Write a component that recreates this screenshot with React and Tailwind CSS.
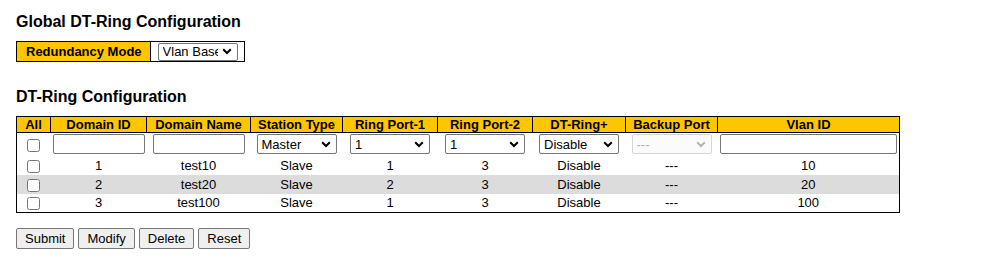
import React from "react";

const rows = [
  { id: 1, name: "test10", type: "Slave", p1: 1, p2: 3, plus: "Disable", backup: "---", vlan: 10 },
  { id: 2, name: "test20", type: "Slave", p1: 2, p2: 3, plus: "Disable", backup: "---", vlan: 20 },
  { id: 3, name: "test100", type: "Slave", p1: 1, p2: 3, plus: "Disable", backup: "---", vlan: 100 },
];

const headers = ["All", "Domain ID", "Domain Name", "Station Type", "Ring Port-1", "Ring Port-2", "DT-Ring+", "Backup Port", "Vlan ID"];
const widths = [34, 96, 104, 92, 95, 95, 93, 92, 182];

const Chevron = ({ disabled }) => (
  <svg width="10" height="7" viewBox="0 0 10 7" className="shrink-0">
    <path d="M1.2 1.3 L5 5 L8.8 1.3" fill="none" stroke={disabled ? "#b5b5b5" : "#000"} strokeWidth="2" />
  </svg>
);

// looks like a windows chrome <select>
const FakeSelect = ({ value, width = "w-[80px]", height = "h-[20px]", disabled, clip }) => (
  <div
    className={`${width} ${height} mx-auto flex items-center justify-between border rounded-[2px] pl-[4px] pr-[5px] ${
      disabled ? "border-[#d6d6d6] bg-[#fbfbfb] text-[#b0b0b0]" : "border-[#767676] bg-white text-black"
    }`}
  >
    <span className={`overflow-hidden whitespace-nowrap text-left leading-none ${clip ? "w-[55px] shrink-0" : "flex-1"}`}>{value}</span>
    <Chevron disabled={disabled} />
  </div>
);

const TextBox = ({ width = "w-[92px]" }) => (
  <div className={`${width} h-[20px] mx-auto border border-[#767676] rounded-[2px] bg-white`} />
);

const Check = () => (
  <input type="checkbox" className="w-[13px] h-[13px] align-middle m-0" readOnly />
);

const Button = ({ label }) => (
  <button className="border border-[#767676] bg-[#efefef] rounded-[2px] px-[8px] py-[2px] leading-[15px] text-[13px] text-black">
    {label}
  </button>
);

export default function App() {
  return (
    <div className="pl-4 pt-[13px] text-black text-[13px]" style={{ fontFamily: '"Liberation Sans", Arial, sans-serif' }}>
      <h1 className="text-base font-bold leading-[18px]">Global DT-Ring Configuration</h1>

      <table className="mt-[10px] border-collapse border border-black">
        <tbody>
          <tr>
            <td className="bg-[#ffc600] font-bold h-[20px] pl-[9px] pr-[8px] border border-black leading-[15px]">Redundancy Mode</td>
            <td className="pl-[7px] pr-[6px]">
              <FakeSelect value="Vlan Base" height="h-[18px]" width="w-[80px]" clip />
            </td>
          </tr>
        </tbody>
      </table>

      <h2 className="mt-[26px] text-base font-bold leading-[18px]">DT-Ring Configuration</h2>

      <table className="mt-[10px] border-collapse border border-black table-fixed w-[884px]">
        <colgroup>
          {widths.map((w, i) => (
            <col key={i} style={{ width: w }} />
          ))}
        </colgroup>
        <thead>
          <tr>
            {headers.map((h) => (
              <th key={h} className="bg-[#ffc600] border border-black font-bold h-[16px] leading-[15px] p-0 text-center">
                {h}
              </th>
            ))}
          </tr>
        </thead>
        <tbody className="text-center">
          <tr className="h-[23px]">
            <td className="p-0"><Check /></td>
            <td className="p-0"><TextBox /></td>
            <td className="p-0"><TextBox /></td>
            <td className="p-0"><FakeSelect value="Master" /></td>
            <td className="p-0"><FakeSelect value="1" /></td>
            <td className="p-0"><FakeSelect value="1" /></td>
            <td className="p-0"><FakeSelect value="Disable" /></td>
            <td className="p-0"><FakeSelect value="---" disabled /></td>
            <td className="p-0"><TextBox width="w-[177px]" /></td>
          </tr>
          {rows.map((r, i) => (
            <tr key={r.id} className={`h-[19px] leading-[15px] ${i % 2 === 1 ? "bg-[#dcdcdc]" : "bg-white"}`}>
              <td className="p-0"><Check /></td>
              <td className="p-0">{r.id}</td>
              <td className="p-0">{r.name}</td>
              <td className="p-0">{r.type}</td>
              <td className="p-0">{r.p1}</td>
              <td className="p-0">{r.p2}</td>
              <td className="p-0">{r.plus}</td>
              <td className="p-0">{r.backup}</td>
              <td className="p-0">{r.vlan}</td>
            </tr>
          ))}
        </tbody>
      </table>

      <div className="mt-[15px] flex gap-[4px]">
        <Button label="Submit" />
        <Button label="Modify" />
        <Button label="Delete" />
        <Button label="Reset" />
      </div>
    </div>
  );
}
